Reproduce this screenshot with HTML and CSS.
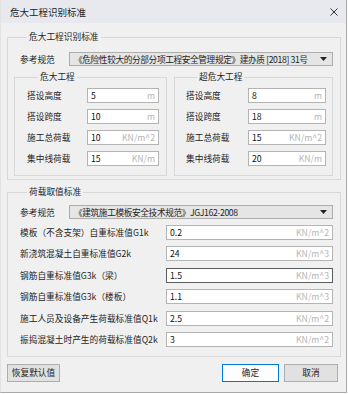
FILE: index.html
```html
<!DOCTYPE html>
<html lang="zh-CN">
<head>
  <meta charset="UTF-8" />
  <meta name="viewport" content="width=device-width, initial-scale=1.0"/>
  <title>危大工程识别标准</title>
  <link rel="stylesheet" href="styles.css">
</head>
<body>
  <div class="window">
    <div class="titlebar">
      <span class="title">危大工程识别标准</span>
      <svg class="close" width="8" height="8" viewBox="0 0 8 8">
        <path d="M0.5 0.5 L7.5 7.5 M7.5 0.5 L0.5 7.5" stroke="#333" stroke-width="1" fill="none"/>
      </svg>
    </div>

    <div class="content">
      <div class="group group-ident">
        <div class="group-title">危大工程识别标准</div>
        <div class="ref-row">
          <span class="label">参考规范</span>
          <div class="combo">
            <span class="combo-text">《危险性较大的分部分项工程安全管理规定》建办质 [2018] 31号</span>
            <svg width="7" height="4" viewBox="0 0 7 4"><path d="M0 0 H7 L3.5 4 Z" fill="#222"/></svg>
          </div>
        </div>

        <div class="sub-groups">
          <div class="group sub sub-left">
            <div class="group-title">危大工程</div>
            <div class="rows">
              <div class="row"><span class="label">搭设高度</span><div class="field"><span>5</span><span class="unit">m</span></div></div>
              <div class="row"><span class="label">搭设跨度</span><div class="field"><span>10</span><span class="unit">m</span></div></div>
              <div class="row"><span class="label">施工总荷载</span><div class="field"><span>10</span><span class="unit">KN/m^2</span></div></div>
              <div class="row"><span class="label">集中线荷载</span><div class="field"><span>15</span><span class="unit">KN/m</span></div></div>
            </div>
          </div>
          <div class="group sub sub-right">
            <div class="group-title">超危大工程</div>
            <div class="rows">
              <div class="row"><span class="label">搭设高度</span><div class="field"><span>8</span><span class="unit">m</span></div></div>
              <div class="row"><span class="label">搭设跨度</span><div class="field"><span>18</span><span class="unit">m</span></div></div>
              <div class="row"><span class="label">施工总荷载</span><div class="field"><span>15</span><span class="unit">KN/m^2</span></div></div>
              <div class="row"><span class="label">集中线荷载</span><div class="field"><span>20</span><span class="unit">KN/m</span></div></div>
            </div>
          </div>
        </div>
      </div>

      <div class="group group-load">
        <div class="group-title">荷载取值标准</div>
        <div class="ref-row">
          <span class="label">参考规范</span>
          <div class="combo">
            <span class="combo-text">《建筑施工模板安全技术规范》JGJ162-2008</span>
            <svg width="7" height="4" viewBox="0 0 7 4"><path d="M0 0 H7 L3.5 4 Z" fill="#222"/></svg>
          </div>
        </div>
        <div class="rows load-rows">
          <div class="row"><span class="label">模板（不含支架）自重标准值G1k</span><div class="field"><span>0.2</span><span class="unit">KN/m^2</span></div></div>
          <div class="row"><span class="label">新浇筑混凝土自重标准值G2k</span><div class="field"><span>24</span><span class="unit">KN/m^3</span></div></div>
          <div class="row"><span class="label">钢筋自重标准值G3k（梁）</span><div class="field hover"><span>1.5</span><span class="unit">KN/m^3</span></div></div>
          <div class="row"><span class="label">钢筋自重标准值G3k（楼板）</span><div class="field"><span>1.1</span><span class="unit">KN/m^3</span></div></div>
          <div class="row"><span class="label">施工人员及设备产生荷载标准值Q1k</span><div class="field"><span>2.5</span><span class="unit">KN/m^2</span></div></div>
          <div class="row"><span class="label">振捣混凝土时产生的荷载标准值Q2k</span><div class="field"><span>3</span><span class="unit">KN/m^2</span></div></div>
        </div>
      </div>

      <div class="footer">
        <button class="btn btn-reset">恢复默认值</button>
        <div class="actions">
          <button class="btn btn-ok">确定</button>
          <button class="btn btn-cancel">取消</button>
        </div>
      </div>
    </div>
  </div>
</body>
</html>
```

FILE: styles.css
```css
* { box-sizing: border-box; margin: 0; padding: 0; }
body {
  font-family: "Noto Sans CJK SC", "Noto Sans", sans-serif;
  font-size: 8.7px;
  color: #1e1e1e;
  background: #fff;
}

.window {
  width: 347px;
  height: 393px;
  background: #f0f0f0;
  border-right: 1px solid #a9a9a9;
  border-bottom: 1px solid #a9a9a9;
  border-left: 1px solid #e2e2e2;
}

.titlebar {
  height: 23px;
  background: #e7e9ee;
  display: flex;
  align-items: center;
  justify-content: space-between;
  padding: 0 8px 0 9px;
}
.title {
  font-size: 9.5px;
  color: #222;
}

.content {
  padding: 14px 5px 0 6px;
}

.group {
  border: 1px solid #d8d8d8;
}
.group-title {
  width: fit-content;
  height: 12px;
  line-height: 12px;
  margin: -7px 0 0 13px;
  padding: 0 2px;
  background: #f0f0f0;
}

.group-ident {
  padding: 0 7px 3px 6px;
}
.group-load {
  margin-top: 12px;
  padding: 0 7px 9px 6px;
}

.ref-row {
  display: flex;
  align-items: center;
  margin-top: 9px;
}
.group-load .ref-row {
  margin-top: 7px;
}
.ref-row .label {
  width: 49px;
  margin-left: 6px;
}
.combo {
  flex: 1;
  height: 14px;
  background: #e5e5e5;
  border: 1px solid #adadad;
  display: flex;
  align-items: center;
  justify-content: space-between;
  padding: 0 5px 0 4px;
  white-space: nowrap;
}
.combo-text {
  letter-spacing: -0.4px;
}

.sub-groups {
  display: grid;
  grid-template-columns: 153px 159px;
  gap: 7px;
  margin-top: 11px;
}
.sub {
  padding-bottom: 9px;
}
.sub .group-title {
  margin-left: 11px;
}
.sub-left { padding-left: 12px; padding-right: 7px; }
.sub-right { padding-left: 11px; padding-right: 6px; }

.rows {
  display: flex;
  flex-direction: column;
  gap: 6px;
  margin-top: 5px;
}
.load-rows {
  gap: 6.4px;
  margin-top: 6px;
  padding-left: 6px;
}
.row {
  display: flex;
  align-items: center;
  justify-content: space-between;
}

.field {
  height: 15px;
  background: #fff;
  border: 1px solid #b4b4b4;
  display: flex;
  align-items: center;
  justify-content: space-between;
  padding: 0 3px;
  color: #111;
}
.field.hover {
  border-color: #5c5c5c;
}
.sub-left .field { width: 72px; }
.sub-right .field { width: 78px; }
.load-rows .field { width: 167px; }
.unit {
  color: #b5b5b5;
}

.footer {
  display: flex;
  justify-content: space-between;
  margin-top: 7px;
  padding-right: 3px;
}
.actions {
  display: flex;
  gap: 5px;
}
.btn {
  font-family: inherit;
  font-size: 8.7px;
  color: #1e1e1e;
  height: 18px;
  background: #e1e1e1;
  border: 1px solid #adadad;
}
.btn-reset { width: 53px; }
.btn-ok {
  width: 57px;
  background: #fdfdfd;
  border-color: #0078d7;
}
.btn-cancel { width: 54px; }
```
